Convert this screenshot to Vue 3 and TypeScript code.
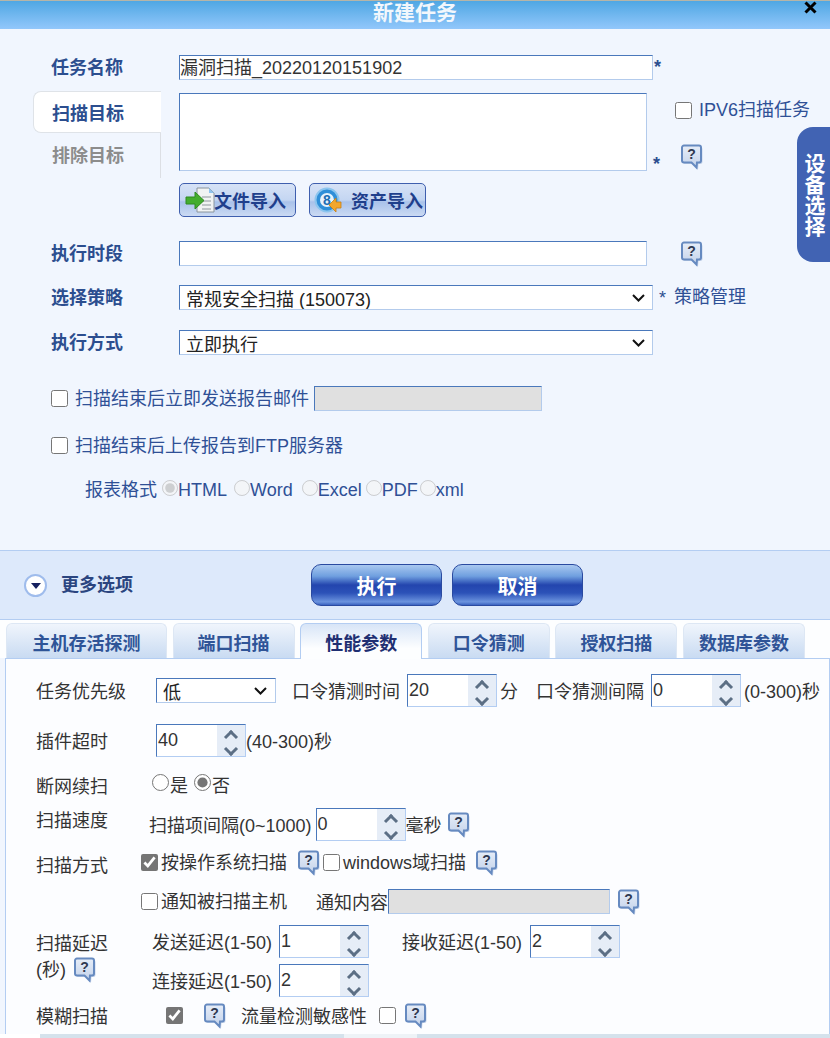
<template>
  <div class="page">
    <svg class="defs" width="0" height="0">
      <defs>
        <linearGradient id="help-fill" x1="0" y1="0" x2="0" y2="1">
          <stop offset="0" stop-color="#e6edf8" />
          <stop offset="1" stop-color="#c3d2ea" />
        </linearGradient>
        <symbol id="help-ic" viewBox="0 0 22 26">
          <path d="M4 3h15.500a2 2 0 0 1 2 2v13a2 2 0 0 1-2 2h-2l-.5 5.500-5.500-5.500H4a2 2 0 0 1-2-2V5a2 2 0 0 1 2-2z" fill="#c6d4e9" />
          <path d="M3 1.500h15a2 2 0 0 1 2 2v13a2 2 0 0 1-2 2h-2l-.5 5-5-5H3a2 2 0 0 1-2-2v-13a2 2 0 0 1 2-2z" fill="url(#help-fill)" stroke="#668ac0" stroke-width="2" />
          <text x="10.500" y="15" text-anchor="middle" font-family="Liberation Sans" font-weight="700" font-size="14" fill="#2f3950">?</text>
        </symbol>
      </defs>
    </svg>

    <header class="titlebar">
      <h1>新建任务</h1>
      <svg class="close" viewBox="0 0 14 14" width="15" height="14"><path d="M2 1.500l10 10M12 1.500l-10 10" stroke="#000" stroke-width="3" /></svg>
    </header>

    <section class="form">
      <div class="row row-name">
        <label class="lbl">任务名称</label>
        <div class="txt txt-val w-474">漏洞扫描_20220120151902</div>
        <span class="star">*</span>
      </div>

      <div class="target">
        <div class="target-tabs">
          <div class="ttab on">扫描目标</div>
          <div class="ttab">排除目标</div>
        </div>
        <textarea class="area"></textarea>
        <span class="star star-area">*</span>
        <div class="target-side">
          <label class="check ipv6"><input type="checkbox" />IPV6扫描任务</label>
          <svg class="help"><use href="#help-ic" /></svg>
        </div>
      </div>

      <div class="import-row">
        <button class="imp" type="button">
          <svg width="34" height="28" viewBox="0 0 34 28">
            <path d="M14 2h12l5 5v19H14z" fill="#f1f3f3" stroke="#8a949c" />
            <path d="M26 2l5 5h-5z" fill="#8fc3ee" />
            <path d="M19 11h9M19 15h9M19 19h9M19 23h9" stroke="#8f979e" />
            <path d="M3 11h9V6l9 8.500-9 8.500v-5H3z" fill="#43ad2e" stroke="#2e8a20" />
          </svg>
          <span class="imp-t1">文件导入</span>
        </button>
        <button class="imp" type="button">
          <svg width="36" height="28" viewBox="0 0 36 28">
            <circle cx="14" cy="14" r="11.500" fill="#2f8fd8" stroke="#8cc5ee" stroke-width="2" />
            <circle cx="14" cy="14" r="7" fill="#e8f3fb" />
            <text x="14" y="19" text-anchor="middle" font-family="Liberation Sans" font-weight="700" font-size="14" fill="#1d6fb5">8</text>
            <path d="M16 19l7-7v4h5v6h-5v4z" fill="#f3a72c" stroke="#c77f14" stroke-width=".8" />
          </svg>
          <span class="imp-t2">资产导入</span>
        </button>
      </div>

      <div class="row row-time">
        <label class="lbl">执行时段</label>
        <input class="txt w-468" type="text" />
        <svg class="help help-time"><use href="#help-ic" /></svg>
      </div>

      <div class="row row-policy">
        <label class="lbl">选择策略</label>
        <select class="sel w-474">
          <option>常规安全扫描 (150073)</option>
        </select>
        <span class="star star-sel">*</span>
        <a class="link">策略管理</a>
      </div>

      <div class="row row-exec">
        <label class="lbl">执行方式</label>
        <select class="sel w-474">
          <option>立即执行</option>
        </select>
      </div>

      <div class="line line-mail">
        <label class="check"><input type="checkbox" />扫描结束后立即发送报告邮件</label>
        <input class="txt off mail" type="text" disabled />
      </div>

      <div class="line line-ftp">
        <label class="check"><input type="checkbox" />扫描结束后上传报告到FTP服务器</label>
      </div>

      <div class="formats">
        <span class="fmt-name">报表格式</span>
        <label v-for="(f, i) in formats" :key="f" class="fmt">
          <input type="radio" name="fmt" disabled :checked="i === 0" />{{ f }}
        </label>
      </div>

      <div class="device">设备选择</div>
    </section>

    <section class="actions">
      <div class="more">
        <span class="more-ic"><i></i></span>
        更多选项
      </div>
      <div class="act-btns">
        <button class="gloss" type="button">执行</button>
        <button class="gloss" type="button">取消</button>
      </div>
    </section>

    <nav class="tabs">
      <div v-for="t in tabs" :key="t" class="tab" :class="{ wide: t === '主机存活探测', on: t === '性能参数' }">{{ t }}</div>
    </nav>

    <section class="panel">
      <div class="p-row p1">
        <span class="p-lbl l-120">任务优先级</span>
        <select class="sel prio"><option>低</option></select>
        <span class="ml-16">口令猜测时间</span>
        <div class="spin ml-7"><span>20</span><div class="spin-b"><i class="up"></i><i class="down"></i></div></div>
        <span class="ml-3">分</span>
        <span class="ml-18">口令猜测间隔</span>
        <div class="spin ml-7"><span>0</span><div class="spin-b"><i class="up"></i><i class="down"></i></div></div>
        <span class="ml-3">(0-300)秒</span>
      </div>

      <div class="p-row p2">
        <span class="p-lbl l-120">插件超时</span>
        <div class="spin"><span>40</span><div class="spin-b"><i class="up"></i><i class="down"></i></div></div>
        <span>(40-300)秒</span>
      </div>

      <div class="p-row p3">
        <span class="p-lbl l-116">断网续扫</span>
        <label class="opt radio"><input type="radio" name="resume" />是</label>
        <label class="opt radio ml-6"><input type="radio" name="resume" checked />否</label>
      </div>

      <div class="p-row p4">
        <span class="p-lbl l-113 self-top">扫描速度</span>
        <span>扫描项间隔(0~1000)</span>
        <div class="spin ml-4"><span>0</span><div class="spin-b"><i class="up"></i><i class="down"></i></div></div>
        <span>毫秒</span>
        <svg class="help ml-6"><use href="#help-ic" /></svg>
      </div>

      <div class="p-row p5">
        <span class="p-lbl l-105 self-low">扫描方式</span>
        <label class="opt"><input type="checkbox" checked />按操作系统扫描</label>
        <svg class="help ml-11"><use href="#help-ic" /></svg>
        <label class="opt ml-3"><input type="checkbox" />windows域扫描</label>
        <svg class="help ml-10"><use href="#help-ic" /></svg>
      </div>

      <div class="p-row p6">
        <span class="p-lbl l-105"></span>
        <label class="opt"><input type="checkbox" />通知被扫描主机</label>
        <span class="ml-29">通知内容</span>
        <input class="txt off notify" type="text" disabled />
        <svg class="help ml-8"><use href="#help-ic" /></svg>
      </div>

      <div class="delay">
        <div class="delay-lbl">
          <span>扫描延迟</span>
          <span class="delay-sec">(秒)<svg class="help ml-8"><use href="#help-ic" /></svg></span>
        </div>
        <div class="delay-grid">
          <span>发送延迟(1-50)</span>
          <div class="spin"><span>1</span><div class="spin-b"><i class="up"></i><i class="down"></i></div></div>
          <span class="recv">接收延迟(1-50)</span>
          <div class="spin"><span>2</span><div class="spin-b"><i class="up"></i><i class="down"></i></div></div>
          <span>连接延迟(1-50)</span>
          <div class="spin"><span>2</span><div class="spin-b"><i class="up"></i><i class="down"></i></div></div>
        </div>
      </div>

      <div class="p-row p9">
        <span class="p-lbl l-130">模糊扫描</span>
        <input class="box" type="checkbox" checked />
        <svg class="help ml-21"><use href="#help-ic" /></svg>
        <span class="ml-15">流量检测敏感性</span>
        <input class="box ml-12" type="checkbox" />
        <svg class="help ml-9"><use href="#help-ic" /></svg>
      </div>
    </section>

    <div class="hbar"><i class="hbar-a"></i><i class="hbar-b"></i></div>
  </div>
</template>

<script setup lang="ts">
const formats: string[] = ['HTML', 'Word', 'Excel', 'PDF', 'xml']
const tabs: string[] = ['主机存活探测', '端口扫描', '性能参数', '口令猜测', '授权扫描', '数据库参数']
</script>

<style>
html,
body {
  margin: 0;
  overflow: hidden;
}
</style>

<style scoped>
.page {
  position: relative;
  width: 830px;
  height: 1038px;
  overflow: hidden;
  font-family: 'Liberation Sans', 'Noto Sans CJK SC', sans-serif;
  font-size: 18px;
  line-height: 25px;
  color: #333;
  background: #f1f6fe;
}
.defs {
  position: absolute;
}
input,
select,
textarea,
button {
  font-family: inherit;
  box-sizing: border-box;
  margin: 0;
}

.titlebar {
  position: relative;
  height: 28px;
  border-top: 1px solid #b5b5a8;
  background: linear-gradient(#4fa7e3, #92c7fb);
  text-align: center;
}
.titlebar h1 {
  margin: 0;
  font-size: 21px;
  line-height: 23px;
  font-weight: 700;
  color: #f2f7fc;
}
.close {
  position: absolute;
  right: 12px;
  top: 0;
}

.form {
  position: relative;
  height: 521px;
  padding-top: 26px;
  box-sizing: border-box;
}
.row {
  display: flex;
  align-items: center;
  height: 25px;
  padding-left: 51px;
}
.lbl {
  width: 128px;
  margin-top: 2px;
  font-weight: 700;
  color: #2c4e8f;
}
.txt,
.sel,
.area {
  border: 1px solid #b3cbec;
  border-top-color: #4a78bb;
  border-left-color: #4a78bb;
  background-color: #fff;
  border-radius: 0;
  outline: none;
}
.txt {
  height: 25px;
  padding: 0;
  font-size: 18px;
  line-height: 23px;
  color: #333;
  box-sizing: border-box;
}
.txt-val {
  line-height: 25px;
  white-space: nowrap;
}
.w-474 {
  width: 474px;
}
.w-468 {
  width: 468px;
}
.star {
  margin-left: 1px;
  color: #2c4e8f;
  font-weight: 700;
  align-self: flex-start;
  line-height: 24px;
}
.target {
  display: flex;
  position: relative;
  height: 92px;
  margin-top: 11px;
  padding-left: 33px;
}
.target-tabs {
  width: 128px;
  margin-right: 18px;
  box-sizing: border-box;
}
.ttab {
  width: 128px;
  height: 45px;
  box-sizing: border-box;
  padding-left: 19px;
  line-height: 46px;
  font-weight: 700;
  color: #8c8c8c;
  border-right: 1px solid #dcdfe4;
}
.ttab.on {
  height: 42px;
  padding-left: 18px;
  line-height: 44px;
  color: #2c4e8f;
  background: #fff;
  border: 1px solid #dfe3e8;
  border-right: 0;
  border-radius: 8px 0 0 8px;
}
.area {
  width: 468px;
  height: 78px;
  margin-top: 2px;
  padding: 0;
  resize: none;
}
.star-area {
  margin: 58px 0 0 6px;
  line-height: 30px;
}
.target-side {
  margin: 2px 0 0 15px;
}
.check {
  display: flex;
  align-items: center;
  color: #2f5096;
}
.check input {
  width: 17px;
  height: 17px;
  margin: 0 7px 0 0;
  accent-color: #757575;
}
.line .check {
  padding-top: 2px;
}
.line .check input {
  margin-top: -2px;
}
.ipv6 {
  height: 34px;
  white-space: nowrap;
}
.help {
  display: block;
  flex: none;
  width: 22px;
  height: 26px;
}
.target-side .help {
  margin: 17px 0 0 6px;
}
.import-row {
  display: flex;
  gap: 13px;
  padding-left: 179px;
}
.imp {
  display: flex;
  align-items: center;
  width: 117px;
  height: 34px;
  padding: 0 0 0 3px;
  border: 1px solid #3f5fae;
  border-radius: 5px;
  background: linear-gradient(#d6e2f6 0, #c4d6f2 50%, #a9c2ea 56%, #cbdaf3 100%);
  font-size: 18px;
  font-weight: 700;
  color: #1f3f8c;
}
.imp svg {
  flex: none;
}
.imp-t1 {
  margin-left: -3px;
}
.imp-t2 {
  margin-left: 2px;
}
.row-time {
  margin-top: 24px;
}
.help-time {
  margin-left: 34px;
}
.row-policy {
  margin-top: 19px;
}
.sel {
  height: 25px;
  padding: 3px 6px 0;
  font-size: 18px;
  line-height: 23px;
  color: #222;
  appearance: none;
  background-image: url("data:image/svg+xml,%3Csvg xmlns='http://www.w3.org/2000/svg' width='13' height='8'%3E%3Cpath d='M1 1l5.500 5.500L12 1' fill='none' stroke='%23111' stroke-width='2'/%3E%3C/svg%3E");
  background-repeat: no-repeat;
  background-position: right 7px center;
}
.star-sel {
  margin-left: 6px;
  font-weight: 400;
  align-self: center;
}
.link {
  margin-left: 8px;
  color: #2f5096;
}
.row-exec {
  margin-top: 20px;
}
.line {
  display: flex;
  align-items: center;
  height: 25px;
  padding-left: 51px;
}
.line-mail {
  margin-top: 31px;
}
.off {
  background-color: #e0e0e0;
}
.mail {
  width: 228px;
  margin-left: 5px;
}
.line-ftp {
  margin-top: 22px;
}
.formats {
  display: flex;
  align-items: center;
  margin-top: 20px;
  padding-left: 85px;
  color: #2f5096;
}
.fmt-name {
  margin-right: 5px;
}
.fmt {
  display: flex;
  align-items: center;
  margin-right: 4px;
}
.fmt:nth-child(2) {
  margin-right: 7px;
}
.fmt:nth-child(3) {
  margin-right: 9px;
}
.fmt:nth-child(5) {
  margin-right: 2px;
}
.fmt input {
  width: 16px;
  height: 16px;
  margin: -6px 0 0 0;
}
.device {
  position: absolute;
  right: 0;
  top: 98px;
  width: 33px;
  height: 135px;
  box-sizing: border-box;
  padding: 26px 0 0 0;
  border-radius: 16px 0 0 16px;
  background: #4163b3;
  color: #fff;
  font-size: 21px;
  line-height: 21px;
  font-weight: 700;
  writing-mode: vertical-rl;
  display: flex;
  align-items: center;
}

.actions {
  position: relative;
  display: flex;
  align-items: center;
  height: 70px;
  box-sizing: border-box;
  border-top: 1px solid #b3cdf2;
  border-bottom: 1px solid #b3cdf2;
  background: #dde9fb;
}
.more {
  display: flex;
  align-items: center;
  width: 311px;
  box-sizing: border-box;
  padding-left: 24px;
  font-weight: 700;
  color: #2b4580;
}
.more-ic {
  display: flex;
  align-items: center;
  justify-content: center;
  width: 23px;
  height: 23px;
  margin-right: 14px;
  box-sizing: border-box;
  border: 2px solid #9fbcec;
  border-radius: 50%;
  background: #fff;
}
.more-ic i {
  width: 0;
  height: 0;
  margin-top: 2px;
  border: 5px solid transparent;
  border-top: 6px solid #15205f;
  border-bottom: 0;
}
.act-btns {
  display: flex;
  gap: 10px;
}
.gloss {
  width: 131px;
  height: 42px;
  padding: 0;
  border: 1px solid #2a4aa0;
  border-radius: 10px;
  background: linear-gradient(#a9c8f0 0, #6f9fdf 28%, #2345ae 50%, #2c52b8 70%, #6b93de 92%, #3a62c0 100%);
  color: #fff;
  font-size: 20px;
  font-weight: 700;
}

.tabs {
  display: flex;
  gap: 5.6px;
  height: 38px;
  padding: 3px 0 0 6px;
  box-sizing: border-box;
  background: #fdfeff;
}
.tab {
  flex: none;
  width: 122px;
  height: 35px;
  box-sizing: border-box;
  border: 1px solid #dde7f4;
  border-bottom: 0;
  border-radius: 6px 6px 0 0;
  background: linear-gradient(#f0f5fc, #c9dbf2);
  text-align: center;
  line-height: 40px;
  font-weight: 700;
  color: #2f5497;
  white-space: nowrap;
}
.tab.wide {
  width: 161px;
}
.tab.on {
  position: relative;
  z-index: 1;
  height: 36px;
  background: linear-gradient(#d8e5f7, #fdfeff 70%);
  border-color: #b3cdf2;
  color: #1f2f72;
}

.panel {
  height: 380px;
  box-sizing: border-box;
  margin-left: 5px;
  padding: 15px 0 0 30px;
  border: 1px solid #b3cdf2;
  border-bottom: 0;
  background: #fcfdff;
  color: #333;
  white-space: nowrap;
}
.p-row {
  display: flex;
  align-items: center;
}
.p-row > span {
  margin-top: 3px;
}
.p-lbl {
  flex: none;
}
.l-105 { width: 105px; }
.l-113 { width: 113px; }
.l-116 { width: 116px; }
.l-120 { width: 120px; }
.l-130 { width: 130px; }
.p-row > .self-top { align-self: flex-start; margin-top: 1px; }
.p-row > .self-low { align-self: flex-start; margin-top: 4px; }
.ml-3 { margin-left: 3px; }
.ml-4 { margin-left: 4px; }
.ml-6 { margin-left: 6px; }
.ml-7 { margin-left: 7px; }
.ml-8 { margin-left: 8px; }
.ml-9 { margin-left: 9px; }
.ml-10 { margin-left: 10px; }
.ml-11 { margin-left: 11px; }
.ml-12 { margin-left: 12px; }
.ml-15 { margin-left: 15px; }
.ml-16 { margin-left: 16px; }
.ml-18 { margin-left: 18px; }
.ml-21 { margin-left: 21px; }
.ml-29 { margin-left: 29px; }
.prio {
  width: 120px;
  background-position: right 8px center;
}
.spin {
  display: flex;
  justify-content: space-between;
  flex: none;
  width: 90px;
  height: 33px;
  box-sizing: border-box;
  padding-left: 1px;
  border: 1px solid #b3cdf2;
  border-top-color: #4a78bb;
  border-left-color: #4a78bb;
  background: #fff;
  line-height: 30px;
}
.spin-b {
  display: flex;
  flex-direction: column;
  align-items: center;
  justify-content: center;
  width: 28px;
  background: #e6edf7;
}
.spin-b i {
  width: 10px;
  height: 10px;
  box-sizing: border-box;
  border-left: 3px solid #5c6f85;
  border-top: 3px solid #5c6f85;
  transform: rotate(45deg);
}
.spin-b i.up {
  margin-top: 5px;
}
.spin-b i.down {
  margin-top: 2px;
  transform: rotate(225deg);
}
.p2 {
  margin-top: 17px;
}
.p3 {
  margin-top: 16px;
  height: 25px;
}
.opt {
  display: flex;
  align-items: center;
  margin-top: 2px;
}
.opt input {
  width: 17px;
  height: 17px;
  margin: -2px 3px 0 0;
  accent-color: #757575;
}
.radio input {
  margin: -8px 1px 0 0;
}
.p4 {
  margin-top: 10px;
}
.p5 {
  margin-top: 9px;
  height: 25px;
}
.p6 {
  margin-top: 14px;
  height: 25px;
}
.notify {
  width: 222px;
}
.delay {
  display: flex;
  margin-top: 11px;
}
.delay-lbl {
  display: flex;
  flex-direction: column;
  width: 116px;
  padding-top: 7px;
}
.delay-sec {
  display: flex;
  align-items: center;
  margin-top: 1px;
}
.delay-sec .help {
  margin-top: -2px;
}
.delay-grid {
  display: grid;
  grid-template-columns: 127px 90px auto 90px;
  grid-auto-rows: 33px;
  row-gap: 6px;
  align-items: center;
}
.delay-grid > span {
  margin-top: 3px;
}
.recv {
  margin: 0 8px 0 33px;
}
.p9 {
  margin-top: 6px;
  height: 25px;
}
.box {
  width: 17px;
  height: 17px;
  flex: none;
  accent-color: #757575;
}

.hbar {
  position: absolute;
  left: 0;
  right: 0;
  bottom: 0;
  height: 4px;
  background: #d5e2ec;
}
.hbar-a,
.hbar-b {
  position: absolute;
  top: 0;
  bottom: 0;
  background: #eef3f7;
}
.hbar-a {
  left: 0;
  width: 40px;
  background: #fff;
}
.hbar-b {
  left: 344px;
  width: 73px;
}
</style>
